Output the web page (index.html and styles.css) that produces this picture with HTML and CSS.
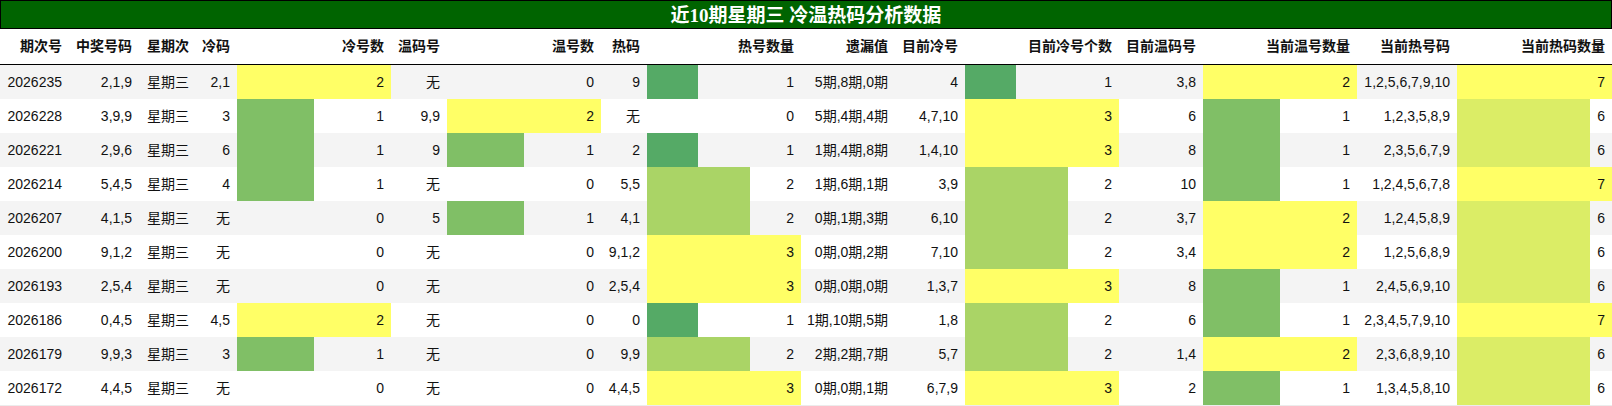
FILE: index.html
```html
<!DOCTYPE html>
<html lang="zh">
<head>
<meta charset="utf-8">
<title>近10期星期三 冷温热码分析数据</title>
<link rel="stylesheet" href="styles.css">
</head>
<body>
<table class="data">
  <caption class="title">近10期星期三 冷温热码分析数据</caption>
  <colgroup>
    <col class="c69"><col class="c70"><col class="c57"><col class="c41">
    <col class="c154"><col class="c56"><col class="c154"><col class="c46">
    <col class="c154"><col class="c94"><col class="c70"><col class="c154">
    <col class="c84"><col class="c154"><col class="c100"><col class="c155">
  </colgroup>
  <thead>
    <tr>
      <th>期次号</th><th>中奖号码</th><th>星期次</th><th>冷码</th>
      <th>冷号数</th><th>温码号</th><th>温号数</th><th>热码</th>
      <th>热号数量</th><th>遗漏值</th><th>目前冷号</th><th>目前冷号个数</th>
      <th>目前温码号</th><th>当前温号数量</th><th>当前热号码</th><th>当前热码数量</th>
    </tr>
  </thead>
  <tbody>
    <tr>
      <td>2026235</td><td>2,1,9</td><td>星期三</td><td>2,1</td>
      <td class="bar" style="--w:100%;--c:#ffff66">2</td><td>无</td>
      <td>0</td><td>9</td>
      <td class="bar" style="--w:33.333%;--c:#55aa66">1</td><td>5期,8期,0期</td><td>4</td>
      <td class="bar" style="--w:33.333%;--c:#55aa66">1</td><td>3,8</td>
      <td class="bar" style="--w:100%;--c:#ffff66">2</td><td>1,2,5,6,7,9,10</td>
      <td class="bar" style="--w:100%;--c:#ffff66">7</td>
    </tr>
    <tr>
      <td>2026228</td><td>3,9,9</td><td>星期三</td><td>3</td>
      <td class="bar" style="--w:50%;--c:#80bf66">1</td><td>9,9</td>
      <td class="bar" style="--w:100%;--c:#ffff66">2</td><td>无</td>
      <td>0</td><td>5期,4期,4期</td><td>4,7,10</td>
      <td class="bar" style="--w:100%;--c:#ffff66">3</td><td>6</td>
      <td class="bar" style="--w:50%;--c:#80bf66">1</td><td>1,2,3,5,8,9</td>
      <td class="bar" style="--w:85.714%;--c:#dbed66">6</td>
    </tr>
    <tr>
      <td>2026221</td><td>2,9,6</td><td>星期三</td><td>6</td>
      <td class="bar" style="--w:50%;--c:#80bf66">1</td><td>9</td>
      <td class="bar" style="--w:50%;--c:#80bf66">1</td><td>2</td>
      <td class="bar" style="--w:33.333%;--c:#55aa66">1</td><td>1期,4期,8期</td><td>1,4,10</td>
      <td class="bar" style="--w:100%;--c:#ffff66">3</td><td>8</td>
      <td class="bar" style="--w:50%;--c:#80bf66">1</td><td>2,3,5,6,7,9</td>
      <td class="bar" style="--w:85.714%;--c:#dbed66">6</td>
    </tr>
    <tr>
      <td>2026214</td><td>5,4,5</td><td>星期三</td><td>4</td>
      <td class="bar" style="--w:50%;--c:#80bf66">1</td><td>无</td>
      <td>0</td><td>5,5</td>
      <td class="bar" style="--w:66.667%;--c:#aad466">2</td><td>1期,6期,1期</td><td>3,9</td>
      <td class="bar" style="--w:66.667%;--c:#aad466">2</td><td>10</td>
      <td class="bar" style="--w:50%;--c:#80bf66">1</td><td>1,2,4,5,6,7,8</td>
      <td class="bar" style="--w:100%;--c:#ffff66">7</td>
    </tr>
    <tr>
      <td>2026207</td><td>4,1,5</td><td>星期三</td><td>无</td>
      <td>0</td><td>5</td>
      <td class="bar" style="--w:50%;--c:#80bf66">1</td><td>4,1</td>
      <td class="bar" style="--w:66.667%;--c:#aad466">2</td><td>0期,1期,3期</td><td>6,10</td>
      <td class="bar" style="--w:66.667%;--c:#aad466">2</td><td>3,7</td>
      <td class="bar" style="--w:100%;--c:#ffff66">2</td><td>1,2,4,5,8,9</td>
      <td class="bar" style="--w:85.714%;--c:#dbed66">6</td>
    </tr>
    <tr>
      <td>2026200</td><td>9,1,2</td><td>星期三</td><td>无</td>
      <td>0</td><td>无</td>
      <td>0</td><td>9,1,2</td>
      <td class="bar" style="--w:100%;--c:#ffff66">3</td><td>0期,0期,2期</td><td>7,10</td>
      <td class="bar" style="--w:66.667%;--c:#aad466">2</td><td>3,4</td>
      <td class="bar" style="--w:100%;--c:#ffff66">2</td><td>1,2,5,6,8,9</td>
      <td class="bar" style="--w:85.714%;--c:#dbed66">6</td>
    </tr>
    <tr>
      <td>2026193</td><td>2,5,4</td><td>星期三</td><td>无</td>
      <td>0</td><td>无</td>
      <td>0</td><td>2,5,4</td>
      <td class="bar" style="--w:100%;--c:#ffff66">3</td><td>0期,0期,0期</td><td>1,3,7</td>
      <td class="bar" style="--w:100%;--c:#ffff66">3</td><td>8</td>
      <td class="bar" style="--w:50%;--c:#80bf66">1</td><td>2,4,5,6,9,10</td>
      <td class="bar" style="--w:85.714%;--c:#dbed66">6</td>
    </tr>
    <tr>
      <td>2026186</td><td>0,4,5</td><td>星期三</td><td>4,5</td>
      <td class="bar" style="--w:100%;--c:#ffff66">2</td><td>无</td>
      <td>0</td><td>0</td>
      <td class="bar" style="--w:33.333%;--c:#55aa66">1</td><td>1期,10期,5期</td><td>1,8</td>
      <td class="bar" style="--w:66.667%;--c:#aad466">2</td><td>6</td>
      <td class="bar" style="--w:50%;--c:#80bf66">1</td><td>2,3,4,5,7,9,10</td>
      <td class="bar" style="--w:100%;--c:#ffff66">7</td>
    </tr>
    <tr>
      <td>2026179</td><td>9,9,3</td><td>星期三</td><td>3</td>
      <td class="bar" style="--w:50%;--c:#80bf66">1</td><td>无</td>
      <td>0</td><td>9,9</td>
      <td class="bar" style="--w:66.667%;--c:#aad466">2</td><td>2期,2期,7期</td><td>5,7</td>
      <td class="bar" style="--w:66.667%;--c:#aad466">2</td><td>1,4</td>
      <td class="bar" style="--w:100%;--c:#ffff66">2</td><td>2,3,6,8,9,10</td>
      <td class="bar" style="--w:85.714%;--c:#dbed66">6</td>
    </tr>
    <tr>
      <td>2026172</td><td>4,4,5</td><td>星期三</td><td>无</td>
      <td>0</td><td>无</td>
      <td>0</td><td>4,4,5</td>
      <td class="bar" style="--w:100%;--c:#ffff66">3</td><td>0期,0期,1期</td><td>6,7,9</td>
      <td class="bar" style="--w:100%;--c:#ffff66">3</td><td>2</td>
      <td class="bar" style="--w:50%;--c:#80bf66">1</td><td>1,3,4,5,8,10</td>
      <td class="bar" style="--w:85.714%;--c:#dbed66">6</td>
    </tr>
  </tbody>
</table>
</body>
</html>
```

FILE: styles.css
```css
html, body {
  margin: 0;
  padding: 0;
  background: #ffffff;
}

.data {
  width: 1612px;
  table-layout: fixed;
  border-collapse: separate;
  border-spacing: 0;
  border-bottom: 1px solid #ececec;
  font-family: "Liberation Sans", "Noto Sans CJK SC", sans-serif;
  font-size: 14px;
  color: #111;
}

.title {
  caption-side: top;
  box-sizing: border-box;
  height: 29px;
  line-height: 27px;
  border: 1px solid #000;
  background: #006400;
  color: #fff;
  font-family: "Liberation Serif", "Noto Sans CJK SC", serif;
  font-weight: bold;
  font-size: 19px;
  text-align: center;
  padding-top: 1px;
}

.c41 { width: 41px; }
.c46 { width: 46px; }
.c56 { width: 56px; }
.c57 { width: 57px; }
.c69 { width: 69px; }
.c70 { width: 70px; }
.c84 { width: 84px; }
.c94 { width: 94px; }
.c100 { width: 100px; }
.c154 { width: 154px; }
.c155 { width: 155px; }

.data th {
  text-align: right;
  font-weight: bold;
  line-height: 19px;
  padding: 8px 7px 8px 0;
  border-bottom: 1px solid #000;
  background: #fff;
  white-space: nowrap;
}

.data td {
  text-align: right;
  line-height: 18px;
  padding: 8px 7px 8px 0;
  white-space: nowrap;
}

.data tbody tr:nth-child(odd) {
  background: #f4f4f4;
}

.data tbody tr:nth-child(even) {
  background: #ffffff;
}

.bar {
  background: linear-gradient(90deg, var(--c) var(--w), transparent var(--w));
}
```
